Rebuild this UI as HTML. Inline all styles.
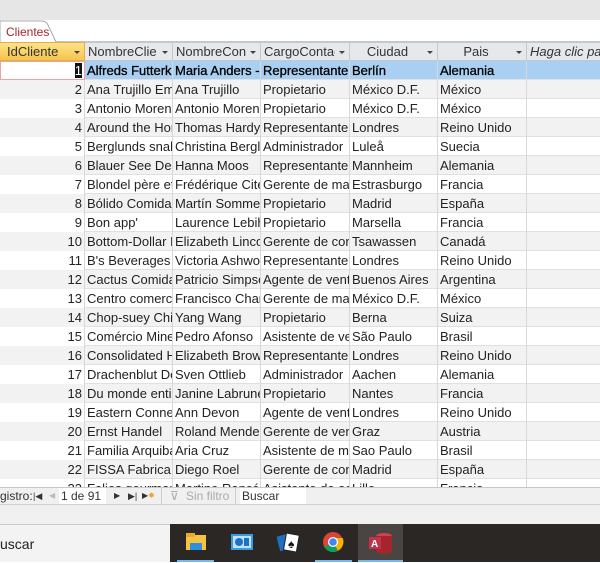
<!DOCTYPE html>
<html><head><meta charset="utf-8"><style>
*{margin:0;padding:0;box-sizing:border-box}
body{width:600px;height:562px;overflow:hidden;background:#fff;font-family:"Liberation Sans",sans-serif;font-size:13px;color:#222;position:relative}
.a{position:absolute}
.row{position:absolute;left:0;width:600px;height:19px;border-bottom:1px solid #e0e0e0}
.c{position:absolute;top:0;height:19px;line-height:19px;overflow:hidden;white-space:nowrap;padding-left:2px;border-right:1px solid #d8d8d8}
.h{position:absolute;top:42px;height:19px;line-height:18px;overflow:hidden;white-space:nowrap;background:#e6e8ec;border-right:1px solid #c4c7cc;border-bottom:1px solid #c4c7cc;border-top:1px solid #c4c7cc;color:#333;font-size:13px}
.dd{position:absolute;right:4px;top:8px;width:0;height:0;border-left:3px solid transparent;border-right:3px solid transparent;border-top:3px solid #444}
</style></head><body>
<div class="a" style="left:0;top:0;width:600px;height:20px;background:#e6e6e6"></div>
<div class="a" style="left:0;top:20px;width:600px;height:22px;background:#fff;border-bottom:1px solid #c4c7cc"></div>
<svg class="a" style="left:0;top:18px" width="60" height="26"><path d="M0 25 L0 3 L42 3 Q46 3 48 7 L56 24" fill="#fff" stroke="#a8a8a8"/></svg>
<div class="a" style="left:6px;top:25px;font-size:12px;color:#a4262c">Clientes</div>

<div class="h" style="left:0;width:85px;background:linear-gradient(#fde38a,#f7c44a);border-color:#e0b040;padding-left:7px">IdCliente<span class="dd"></span></div>
<div class="h" style="left:85px;width:88px;padding-left:3px">NombreClie<span class="dd" style="box-shadow:0 0 0 4px #e6e8ec"></span></div>
<div class="h" style="left:173px;width:88px;padding-left:3px">NombreCon<span class="dd" style="box-shadow:0 0 0 4px #e6e8ec"></span></div>
<div class="h" style="left:261px;width:89px;padding-left:3px">CargoContac<span class="dd" style="box-shadow:0 0 0 4px #e6e8ec"></span></div>
<div class="h" style="left:350px;width:88px;text-align:center;padding-right:12px">Ciudad<span class="dd"></span></div>
<div class="h" style="left:438px;width:89px;text-align:center;padding-right:12px">Pais<span class="dd"></span></div>
<div class="h" style="left:527px;width:73px;padding-left:3px;font-style:italic;border-right:none">Haga clic para</div>

<div id="g"></div>
<script>
var d=[["Alfreds Futterkiste","Maria Anders - ","Representante","Berlín","Alemania"],
["Ana Trujillo Emparedados","Ana Trujillo","Propietario","México D.F.","México"],
["Antonio Moreno","Antonio Moreno","Propietario","México D.F.","México"],
["Around the Horn","Thomas Hardy","Representante","Londres","Reino Unido"],
["Berglunds snabbköp","Christina Berglund","Administrador","Luleå","Suecia"],
["Blauer See Delikatessen","Hanna Moos","Representante","Mannheim","Alemania"],
["Blondel père et fils","Frédérique Citeaux","Gerente de marketing","Estrasburgo","Francia"],
["Bólido Comidas","Martín Sommer","Propietario","Madrid","España"],
["Bon app'","Laurence Lebihan","Propietario","Marsella","Francia"],
["Bottom-Dollar Markets","Elizabeth Lincoln","Gerente de contabilidad","Tsawassen","Canadá"],
["B's Beverages","Victoria Ashworth","Representante","Londres","Reino Unido"],
["Cactus Comidas","Patricio Simpson","Agente de ventas","Buenos Aires","Argentina"],
["Centro comercial","Francisco Chang","Gerente de marketing","México D.F.","México"],
["Chop-suey Chinese","Yang Wang","Propietario","Berna","Suiza"],
["Comércio Mineiro","Pedro Afonso","Asistente de ventas","São Paulo","Brasil"],
["Consolidated Holdings","Elizabeth Brown","Representante","Londres","Reino Unido"],
["Drachenblut Delikatessen","Sven Ottlieb","Administrador","Aachen","Alemania"],
["Du monde entier","Janine Labrune","Propietario","Nantes","Francia"],
["Eastern Connection","Ann Devon","Agente de ventas","Londres","Reino Unido"],
["Ernst Handel","Roland Mendel","Gerente de ventas","Graz","Austria"],
["Familia Arquibaldo","Aria Cruz","Asistente de marketing","Sao Paulo","Brasil"],
["FISSA Fabrica Inter","Diego Roel","Gerente de contabilidad","Madrid","España"],
["Folies gourmandes","Martine Rancé","Asistente de agente","Lille","Francia"]];
var L=[85,173,261,350,438,527,600],h="";
for(var i=0;i<23;i++){var t=61+19*i,sel=i==0,bg=sel?"#a9cff2":(i%2?"#f2f2f2":"#fff");
h+='<div class="row" style="top:'+t+'px;background:'+bg+'">';
h+='<div class="c" style="left:0;width:85px;text-align:right;padding-right:2px;'+(sel?'background:#fff;border:1px solid #f4a0a0;line-height:17px;':'background:'+bg+';')+'">'+(sel?'<span style="background:#111;color:#fff">1</span>':(i+1))+'</div>';
for(var j=0;j<5;j++)h+='<div class="c" style="left:'+L[j]+'px;width:'+(L[j+1]-L[j])+'px;'+(sel?'color:#000;-webkit-text-stroke:0.3px #000;':'')+'">'+d[i][j]+'</div>';
h+='<div class="c" style="left:527px;width:73px;border-right:none"></div></div>';}
document.getElementById("g").innerHTML=h;
</script>

<div class="a" style="left:0;top:487px;width:600px;height:18px;background:#f0f0f0;border-top:1px solid #c8c8c8;border-bottom:1px solid #d0d0d0;font-size:12px;line-height:16px;color:#333">
<span class="a" style="left:0">gistro:</span>
<span class="a" style="left:33px;font-size:9px">|◀</span>
<span class="a" style="left:49px;color:#bbb;font-size:8px">◀</span>
<span class="a" style="left:59px;top:0;width:47px;height:16px;background:#fff;padding-left:2px">1 de 91</span>
<span class="a" style="left:114px;font-size:8px">▶</span>
<span class="a" style="left:128px;font-size:9px">▶|</span>
<span class="a" style="left:142px;font-size:8px">▶<span style="color:#f0a030">✸</span></span>
<span class="a" style="left:161px;top:0;width:1px;height:16px;background:#ccc"></span>
<span class="a" style="left:170px;color:#aaa">⊽</span>
<span class="a" style="left:186px;color:#aaa">Sin filtro</span>
<span class="a" style="left:235px;top:0;width:1px;height:16px;background:#ccc"></span>
<span class="a" style="left:240px;top:0;width:66px;height:16px;background:#fff;padding-left:2px">Buscar</span>
</div>
<div class="a" style="left:0;top:505px;width:600px;height:19px;background:#f0f0f0"></div>
<div class="a" style="left:0;top:524px;width:170px;height:38px;background:#f3f3f3;border-top:1px solid #ccc;font-size:14px;line-height:38px;color:#222">uscar</div>
<div class="a" style="left:170px;top:524px;width:430px;height:38px;background:#2b2724"></div>
<div class="a" style="left:358px;top:524px;width:45px;height:38px;background:#4a4542"></div>
<svg class="a" style="left:185px;top:532px" width="22" height="20"><rect x="1" y="3" width="20" height="15" fill="#f5c242"/><rect x="1" y="1" width="9" height="4" fill="#e9a92a"/><rect x="5" y="11" width="12" height="7" fill="#2d8fe0"/></svg>
<svg class="a" style="left:231px;top:533px" width="22" height="18"><rect x="0" y="1" width="22" height="16" fill="#3a9be0"/><rect x="2" y="3" width="18" height="12" fill="#bfe2fa"/><circle cx="8" cy="9" r="4" fill="#1d72c4"/><rect x="13" y="5" width="5" height="8" fill="#1d72c4"/></svg>
<svg class="a" style="left:277px;top:531px" width="24" height="22"><rect x="1" y="4" width="12" height="15" fill="#1e6fc0" transform="rotate(-15 7 11)"/><rect x="8" y="3" width="13" height="17" fill="#fff" stroke="#222" transform="rotate(10 14 11)"/><text x="11" y="17" font-size="12" fill="#111">♠</text></svg>
<svg class="a" style="left:322px;top:531px" width="22" height="22"><circle cx="11" cy="11" r="10" fill="#db4437"/><path d="M11 11 L2.3 16 A10 10 0 0 0 16 19.7Z" fill="#0f9d58"/><path d="M11 11 L16 19.7 A10 10 0 0 0 20.7 7 L11 7Z" fill="#f4b400"/><circle cx="11" cy="11" r="5" fill="#fff"/><circle cx="11" cy="11" r="3.8" fill="#4285f4"/></svg>
<svg class="a" style="left:368px;top:531px" width="26" height="24"><ellipse cx="16" cy="5" rx="8" ry="3" fill="#d04050"/><rect x="8" y="5" width="16" height="15" fill="#a4262c"/><ellipse cx="16" cy="20" rx="8" ry="3" fill="#a4262c"/><rect x="1" y="6" width="12" height="12" fill="#c4314b"/><text x="3" y="16" font-size="10" font-weight="bold" fill="#fff" font-family="Liberation Sans">A</text></svg>
<div class="a" style="left:177px;top:560px;width:37px;height:2px;background:#76b9ed"></div>
<div class="a" style="left:315px;top:560px;width:37px;height:2px;background:#76b9ed"></div>
<div class="a" style="left:358px;top:560px;width:45px;height:2px;background:#76b9ed"></div>
</body></html>
